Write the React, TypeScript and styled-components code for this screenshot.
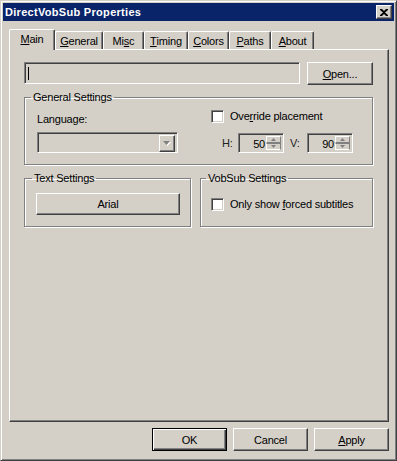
import styled, { createGlobalStyle, css } from 'styled-components';

const face = '#d4d0c8';
const shadow = '#808080';
const dark = '#404040';

const GlobalStyle = createGlobalStyle`
  html, body {
    margin: 0;
    padding: 0;
    background: ${face};
  }
  body {
    font-family: "Liberation Sans", Arial, sans-serif;
    font-size: 11px;
    letter-spacing: -0.2px;
    color: #000;
  }
`;

const raised = css`
  border: 1px solid;
  border-color: #fff ${dark} ${dark} #fff;
  box-shadow: inset -1px -1px 0 ${shadow};
`;

const sunken = css`
  border: 1px solid;
  border-color: ${shadow} #fff #fff ${shadow};
  box-shadow: inset 1px 1px 0 ${dark}, inset -1px -1px 0 ${face};
`;

const Window = styled.div`
  box-sizing: border-box;
  width: 397px;
  height: 461px;
  border: 1px solid;
  border-color: ${face} ${dark} ${dark} ${face};
  box-shadow: inset 1px 1px 0 #fff, inset -1px -1px 0 ${shadow};
  padding: 2px;
  background: ${face};
`;

const TitleBar = styled.div`
  height: 18px;
  background: #0a246a;
  display: flex;
  align-items: center;
  justify-content: space-between;
  padding: 0 2px 0 2px;
  color: #fff;
  font-weight: bold;
  font-size: 11px;
  letter-spacing: 0.3px;
`;

const CloseButton = styled.div`
  box-sizing: border-box;
  width: 16px;
  height: 14px;
  background: ${face};
  ${raised};
  display: flex;
  align-items: center;
  justify-content: center;
`;

const Body = styled.div`
  padding: 8px 5px 0 6px;
`;

const TabStrip = styled.div`
  display: flex;
  align-items: flex-end;
  height: 20px;
  position: relative;
  z-index: 1;
`;

const Tab = styled.div<{ $w: number; $active?: boolean }>`
  box-sizing: border-box;
  width: ${(p) => p.$w}px;
  height: ${(p) => (p.$active ? 21 : 18)}px;
  margin-bottom: ${(p) => (p.$active ? -1 : 0)}px;
  padding-bottom: ${(p) => (p.$active ? 3 : 0)}px;
  background: ${face};
  border-top: 1px solid #fff;
  border-left: 1px solid #fff;
  border-right: 1px solid ${dark};
  box-shadow: inset -1px 0 0 ${shadow};
  border-radius: 2px 2px 0 0;
  display: flex;
  align-items: center;
  justify-content: center;
`;

const TabPanel = styled.div`
  box-sizing: border-box;
  height: 373px;
  border: 1px solid;
  border-color: #fff ${dark} ${dark} #fff;
  box-shadow: inset -1px -1px 0 ${shadow};
  padding: 12px 15px 0 14px;
  display: flex;
  flex-direction: column;
`;

const EditRow = styled.div`
  display: flex;
  gap: 7px;
  align-items: flex-start;
`;

const PathEdit = styled.div`
  box-sizing: border-box;
  flex: 1;
  height: 22px;
  background: ${face};
  ${sunken};
  display: flex;
  align-items: center;
  padding-left: 3px;
`;

const Caret = styled.div`
  width: 1px;
  height: 13px;
  background: #000;
`;

const Button = styled.div<{ $w: number; $h?: number; $default?: boolean }>`
  box-sizing: border-box;
  width: ${(p) => p.$w}px;
  height: ${(p) => p.$h ?? 23}px;
  background: ${face};
  display: flex;
  align-items: center;
  justify-content: center;
  ${(p) =>
    p.$default
      ? css`
          border: 1px solid #000;
          box-shadow: inset 1px 1px 0 #fff, inset -1px -1px 0 ${dark}, inset -2px -2px 0 ${shadow};
        `
      : raised};
`;

const Group = styled.fieldset<{ $pl: number; $pr: number; $pb: number; $w?: number }>`
  margin: 0;
  min-width: 0;
  border: 1px solid ${shadow};
  box-shadow: inset 1px 1px 0 #fff, 1px 1px 0 #fff;
  padding: 0 ${(p) => p.$pr}px ${(p) => p.$pb}px ${(p) => p.$pl}px;
  ${(p) => (p.$w ? `width: ${p.$w}px; box-sizing: border-box;` : 'flex: 1;')}
`;

const Legend = styled.legend<{ $ml: number }>`
  padding: 0 2px;
  margin-left: ${(p) => p.$ml}px;
  line-height: 13px;
  font-size: 11px;
`;

const GeneralGroup = styled(Group)`
  flex: none;
  margin-top: 6px;
  display: flex;
`;

const Column = styled.div<{ $w?: number; $ml?: number }>`
  display: flex;
  flex-direction: column;
  ${(p) => (p.$w ? `width: ${p.$w}px;` : '')}
  margin-left: ${(p) => p.$ml ?? 0}px;
`;

const Label = styled.div<{ $mt?: number }>`
  line-height: 13px;
  margin-top: ${(p) => p.$mt ?? 0}px;
`;

const Combo = styled.div`
  box-sizing: border-box;
  height: 21px;
  margin-top: 6px;
  background: ${face};
  ${sunken};
  display: flex;
  justify-content: flex-end;
  padding: 2px;
`;

const ComboButton = styled.div`
  box-sizing: border-box;
  width: 16px;
  height: 17px;
  background: ${face};
  ${raised};
  display: flex;
  align-items: center;
  justify-content: center;
`;

const CheckRow = styled.div<{ $mt: number }>`
  display: flex;
  align-items: center;
  gap: 6px;
  height: 13px;
  margin-top: ${(p) => p.$mt}px;
  line-height: 13px;
`;

const CheckBox = styled.div`
  box-sizing: border-box;
  width: 13px;
  height: 13px;
  background: #fff;
  ${sunken};
`;

const SpinRow = styled.div`
  display: flex;
  align-items: center;
  height: 20px;
  margin-top: 10px;
  padding-left: 11px;
`;

const SpinLabel = styled.div<{ $w: number; $ml?: number }>`
  width: ${(p) => p.$w}px;
  margin-left: ${(p) => p.$ml ?? 0}px;
  color: #222;
`;

const Spin = styled.div`
  box-sizing: border-box;
  width: 46px;
  height: 20px;
  background: ${face};
  ${sunken};
  display: flex;
  padding: 2px;
`;

const SpinValue = styled.div`
  flex: 1;
  text-align: right;
  line-height: 16px;
  padding-right: 1px;
`;

const SpinButtons = styled.div`
  width: 15px;
  display: flex;
  flex-direction: column;
`;

const SpinButton = styled.div<{ $down?: boolean }>`
  box-sizing: border-box;
  height: 8px;
  overflow: hidden;
  background: ${face};
  border: 1px solid;
  border-color: #fff ${shadow} ${shadow} #fff;
  display: flex;
  align-items: center;
  justify-content: center;
  ${(p) => (p.$down ? 'transform: scaleY(-1);' : '')}
`;

const BottomGroups = styled.div`
  display: flex;
  gap: 9px;
  margin-top: 7px;
`;

const FontButton = styled(Button)`
  margin-top: 8px;
  width: auto;
`;

const DialogButtons = styled.div`
  display: flex;
  justify-content: flex-end;
  gap: 6px;
  margin-top: 6px;
`;

const CloseGlyph = () => (
  <svg width="8" height="7" viewBox="0 0 8 7">
    <path d="M0 0h2l2 2 2-2h2v1L5 3.5 8 6v1H6L4 5 2 7H0V6l3-2.5L0 1z" fill="#000" />
  </svg>
);

const DownArrow = ({ w, h }: { w: number; h: number }) => (
  <svg width={w + 1} height={h + 1} viewBox={`0 0 ${w + 1} ${h + 1}`}>
    <polygon points={`1,1 ${w + 1},1 ${(w + 2) / 2},${h + 1}`} fill="#fff" />
    <polygon points={`0,0 ${w},0 ${w / 2},${h}`} fill={shadow} />
  </svg>
);

const UpArrow = () => (
  <svg width="5" height="3" viewBox="0 0 5 3">
    <polygon points="2.5,0 5,3 0,3" fill={shadow} />
  </svg>
);

const tabs: { label: React.ReactNode; w: number; active?: boolean }[] = [
  { label: <><u>M</u>ain</>, w: 46, active: true },
  { label: <><u>G</u>eneral</>, w: 48 },
  { label: <>Mi<u>s</u>c</>, w: 41 },
  { label: <><u>T</u>iming</>, w: 44 },
  { label: <><u>C</u>olors</>, w: 41 },
  { label: <><u>P</u>aths</>, w: 42 },
  { label: <><u>A</u>bout</>, w: 43 },
];

const SpinBox = ({ value }: { value: number }) => (
  <Spin>
    <SpinValue>{value}</SpinValue>
    <SpinButtons>
      <SpinButton><UpArrow /></SpinButton>
      <SpinButton $down><UpArrow /></SpinButton>
    </SpinButtons>
  </Spin>
);

export default function App() {
  return (
    <>
      <GlobalStyle />
      <Window>
        <TitleBar>
          <span>DirectVobSub Properties</span>
          <CloseButton><CloseGlyph /></CloseButton>
        </TitleBar>
        <Body>
          <TabStrip>
            {tabs.map((t, i) => (
              <Tab key={i} $w={t.w} $active={t.active}>{t.label}</Tab>
            ))}
          </TabStrip>
          <TabPanel>
            <EditRow>
              <PathEdit><Caret /></PathEdit>
              <Button $w={66}><span><u>O</u>pen...</span></Button>
            </EditRow>

            <GeneralGroup $pl={12} $pr={12} $pb={11}>
              <Legend $ml={-6}>General Settings</Legend>
              <Column $w={141}>
                <Label $mt={9}>Language:</Label>
                <Combo>
                  <ComboButton><DownArrow w={7} h={4} /></ComboButton>
                </Combo>
              </Column>
              <Column $ml={33}>
                <CheckRow $mt={6}>
                  <CheckBox />
                  <span>Ove<u>r</u>ride placement</span>
                </CheckRow>
                <SpinRow>
                  <SpinLabel $w={16}>H:</SpinLabel>
                  <SpinBox value={50} />
                  <SpinLabel $w={17} $ml={6}>V:</SpinLabel>
                  <SpinBox value={90} />
                </SpinRow>
              </Column>
            </GeneralGroup>

            <BottomGroups>
              <Group $w={167} $pl={11} $pr={10} $pb={11}>
                <Legend $ml={-4}>Text Settings</Legend>
                <FontButton $w={144} $h={22}>Arial</FontButton>
              </Group>
              <Group $pl={10} $pr={10} $pb={11}>
                <Legend $ml={-5}>VobSub Settings</Legend>
                <CheckRow $mt={13}>
                  <CheckBox />
                  <span>Only show <u>f</u>orced subtitles</span>
                </CheckRow>
              </Group>
            </BottomGroups>
          </TabPanel>
          <DialogButtons>
            <Button $w={75} $default>OK</Button>
            <Button $w={75}>Cancel</Button>
            <Button $w={75}><span><u>A</u>pply</span></Button>
          </DialogButtons>
        </Body>
      </Window>
    </>
  );
}
